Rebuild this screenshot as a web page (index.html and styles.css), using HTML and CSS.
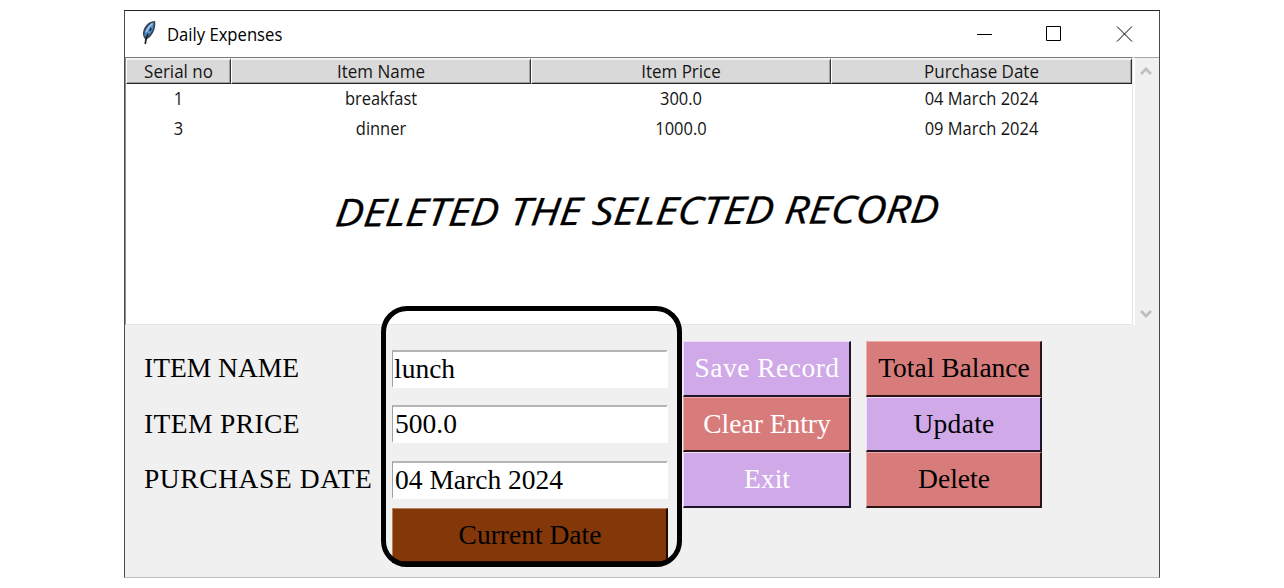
FILE: index.html
```
<!DOCTYPE html>
<html lang="en">
<head>
<meta charset="utf-8">
<title>Daily Expenses</title>
<link rel="stylesheet" href="styles.css">
</head>
<body>
<div class="window">
  <header class="titlebar">
    <svg class="feather" width="16" height="26" viewBox="0 0 16 26">
      <path d="M3.500 24L4 19C.8 15.500 1.500 9.500 5.500 5C8 2 11 1 14 1C15.200 6 13 13 9 17L5.500 19.500Z" fill="#3b444d"/>
      <path d="M4 17C2.500 13 4.500 9 7.500 5.500C9 4 11 2.500 12.500 2.500C13 8 11 12 8 15Z" fill="#4f8fd0"/>
      <path d="M5 12L8 7L11.500 3.500" fill="none" stroke="#9fc8ec" stroke-width="1.500"/>
      <path d="M4.300 24L5.500 17L7 13.500M9 11L10 8" fill="none" stroke="#172332" stroke-width="1.500"/>
    </svg>
    <h1 class="title">Daily Expenses</h1>
    <svg class="controls" width="157" height="16" viewBox="0 0 157 16" fill="none" stroke="#000" stroke-width="1">
      <path d="M0 8.500H15M69.500 .5H83.500V14.500H69.500ZM140 .5L155 15.500M155 .5L140 15.500"/>
    </svg>
  </header>
  <div class="listing">
    <div class="table">
      <div class="row head"><span><b>Serial no</b></span><span><b>Item Name</b></span><span><b>Item Price</b></span><span><b>Purchase Date</b></span></div>
      <div class="row"><span>1</span><span>breakfast</span><span>300.0</span><span>04 March 2024</span></div>
      <div class="row"><span>3</span><span>dinner</span><span>1000.0</span><span>09 March 2024</span></div>
      <div class="notice"><span class="notice-text">DELETED THE SELECTED RECORD</span></div>
    </div>
    <div class="scrollbar">
      <svg width="12" height="10" viewBox="0 0 12 10"><path d="M1 8L6 3L11 8" fill="none" stroke="#bfbfbf" stroke-width="2.800"/></svg>
      <svg width="12" height="10" viewBox="0 0 12 10"><path d="M1 2L6 7L11 2" fill="none" stroke="#bfbfbf" stroke-width="2.800"/></svg>
    </div>
  </div>
  <div class="form">
    <label class="label">ITEM NAME</label>
    <div class="entry lunch">lunch</div>
    <div class="button lilac light save">Save Record</div>
    <div class="button red">Total Balance</div>
    <label class="label price">ITEM PRICE</label>
    <div class="entry">500.0</div>
    <div class="button red light">Clear Entry</div>
    <div class="button lilac update">Update</div>
    <label class="label date">PURCHASE DATE</label>
    <div class="entry">04 March 2024</div>
    <div class="button lilac light">Exit</div>
    <div class="button red">Delete</div>
    <div class="button brown">Current Date</div>
  </div>
  <div class="highlight"></div>
</div>
</body>
</html>
```
FILE: styles.css
```
* { box-sizing: border-box; }
body { margin: 0; background: #fff; padding: 10px 124px 0; }
.window {
  position: relative;
  width: 1036px;
  height: 568px;
  border: 1px solid #4a4a4a;
  border-top-color: #222;
  border-bottom-color: #bdbdbd;
  background: #f0f0f0;
  font-family: "Open Sans", "Noto Sans", sans-serif;
  color: #000;
}
.titlebar {
  display: flex;
  align-items: center;
  height: 46px;
  padding: 0 25px 0 16px;
  background: #fff;
}
.feather { margin-top: -3px; }
.title {
  margin: 0 0 0 10px;
  font-size: 18px;
  font-weight: 400;
  line-height: 24px;
  white-space: nowrap;
  transform: scaleX(.925);
  transform-origin: left;
}
.controls { margin: -1px 0 0 auto; }
.listing { display: flex; height: 268px; }
.table {
  width: 1008px;
  background: #fff;
  border: 1px solid #e6e6e6;
  border-top-color: #7b7b7b;
  border-left-color: #8c8c8c;
}
.row {
  display: grid;
  grid-template-columns: 105px 300px 300px 301px;
  height: 30px;
  font-size: 17.5px;
  line-height: 31px;
  text-align: center;
  color: #151515;
}
.row:not(.head) span { transform: scaleX(.94); }
.head { height: 26px; }
.head + .row { margin-top: -1px; }
.head span {
  background: #d9d9d9;
  border-top: 2px solid #f4f4f4;
  border-left: 1px solid #fff;
  border-right: 1px solid #333;
  border-bottom: 1px solid #222;
  box-shadow: inset -1px -1px #a0a0a0;
}
.head b { display: block; font-weight: 400; line-height: 23px; transform: scaleX(.97); }
.notice { display: flex; justify-content: center; padding-top: 41px; }
.notice-text {
  font: italic 500 38px/52px "Open Sans", "Noto Sans", sans-serif;
  white-space: nowrap;
  -webkit-text-stroke: .3px #000;
  transform: translate(8.500px, -.5px) rotate(-.35deg) skewX(-7deg) scaleX(1.113);
}
.scrollbar {
  display: flex;
  flex: 1;
  flex-direction: column;
  align-items: center;
  justify-content: space-between;
  padding: 8px 3px 6px 0;
  border-top: 1px solid #a5a5a5;
  border-left: 2px solid #fff;
}
.form {
  display: grid;
  grid-template-columns: 232px 276px 168px 176px;
  grid-template-rows: repeat(4, 55.600px);
  column-gap: 15px;
  padding: 16px 0 0 20px;
  align-items: center;
  font: 27.500px/34px "Liberation Serif", serif;
  white-space: nowrap;
}
.label { margin-left: -1px; margin-top: -1px; }
.label.price { letter-spacing: .4px; }
.label.date { letter-spacing: .58px; }
.entry {
  height: 38px;
  padding-left: 2px;
  line-height: 33px;
  background: #fff;
  border: 2px solid #fff;
  border-top-color: #b4b4b4;
  border-left: 1px solid #a0a0a0;
}
.entry.lunch { padding-left: 1px; }
.button {
  height: 55.600px;
  padding-left: 1px;
  border: 1px solid;
  border-right-width: 2px;
  border-bottom-width: 2px;
  line-height: 51px;
  text-align: center;
}
.save { letter-spacing: .5px; }
.update { letter-spacing: .3px; }
.lilac { background: #d0a9e8; border-color: #f1dcfb #21152a #21152a #f1dcfb; }
.red { background: #d87c7b; border-color: #efaaa9 #2c1515 #2c1515 #efaaa9; }
.brown { grid-column: 2; background: #843809; border-color: #b9805e #1d0b00 #1d0b00 #b9805e; }
.light { color: #fff; }
.highlight {
  position: absolute;
  left: 256px;
  top: 295px;
  width: 301px;
  height: 261px;
  border: 5px solid #000;
  border-radius: 26px;
}
```
